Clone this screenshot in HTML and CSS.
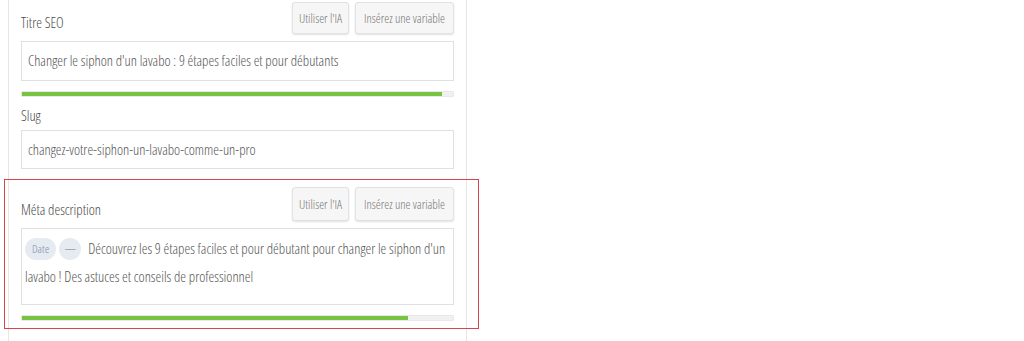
FILE: index.html
```html
<!DOCTYPE html>
<html lang="fr">
<head>
<meta charset="utf-8">
<title>SEO</title>
<link rel="stylesheet" href="styles.css">
</head>
<body>
<div class="panel">
  <section class="field">
    <div class="field-head">
      <span class="label">Titre SEO</span>
      <div class="actions">
        <button class="btn btn-ia">Utiliser l'IA</button>
        <button class="btn">Insérez une variable</button>
      </div>
    </div>
    <div class="input">Changer le siphon d'un lavabo : 9 étapes faciles et pour débutants</div>
    <div class="progress"><div class="bar" style="width: 97.5%"></div></div>
  </section>

  <section class="field field-slug">
    <div class="label label-block">Slug</div>
    <div class="input">changez-votre-siphon-un-lavabo-comme-un-pro</div>
  </section>

  <section class="field field-meta">
    <div class="highlight"></div>
    <div class="field-head">
      <span class="label">Méta description</span>
      <div class="actions">
        <button class="btn btn-ia">Utiliser l'IA</button>
        <button class="btn">Insérez une variable</button>
      </div>
    </div>
    <div class="textarea">
      <span class="chip">Date</span><span class="chip chip-dash">—</span><span class="desc">Découvrez les 9 étapes faciles et pour débutant pour changer le siphon d'un</span><br><span class="desc">lavabo ! Des astuces et conseils de professionnel</span>
    </div>
    <div class="progress"><div class="bar" style="width: 89.6%"></div></div>
  </section>
</div>
</body>
</html>
```
FILE: styles.css
```css
html, body {
  margin: 0;
  padding: 0;
  background: #ffffff;
}

body {
  width: 1024px;
  height: 341px;
  overflow: hidden;
  font-family: "Open Sans", "Noto Sans", sans-serif;
  font-stretch: 83%;
  font-weight: 350;
  color: #555;
}

.panel {
  margin-left: 8px;
  width: 433px;
  min-height: 341px;
  padding: 2px 12px 0 12px;
  border-left: 1px solid #e6e6e6;
  border-right: 1px solid #e6e6e6;
}

.field {
  position: relative;
}

.field-head {
  display: flex;
  justify-content: space-between;
  align-items: flex-end;
  height: 32px;
  margin-bottom: 7px;
}

.label {
  font-size: 14.5px;
  color: #4a4a4a;
  line-height: 18px;
  padding-bottom: 2px;
}

.actions {
  display: flex;
  gap: 6px;
  height: 32px;
}

.btn {
  font-family: inherit;
  font-stretch: 83%;
  font-weight: 350;
  font-size: 12.5px;
  color: #777;
  background: #f6f6f6;
  border: 1px solid #e2e2e2;
  border-radius: 3px;
  box-shadow: 0 1px 2px rgba(0, 0, 0, 0.12);
  padding: 0 4px;
  width: 99px;
  height: 32px;
  white-space: nowrap;
  cursor: pointer;
}

.btn-ia {
  width: 57px;
  padding: 0 2px;
}

.input {
  box-sizing: border-box;
  height: 40px;
  border: 1px solid #e0e0e0;
  padding: 0 6px;
  font-size: 14.5px;
  line-height: 38px;
  color: #555;
  white-space: nowrap;
}

.progress {
  margin-top: 10px;
  height: 6px;
  background: #f1f1f1;
  border: 1px solid #e8e8e8;
  box-sizing: border-box;
  border-radius: 1px;
  overflow: hidden;
}

.bar {
  height: 100%;
  background: #76c442;
}

.field-slug .label-block {
  margin-top: 10px;
  padding-bottom: 0;
  margin-bottom: 5px;
}

.field-slug .input {
  height: 39px;
  line-height: 37px;
}

.field-meta {
  margin-top: 18px;
}

.field-meta .field-head {
  height: 34px;
}

.field-meta .actions,
.field-meta .btn {
  height: 34px;
}

.textarea {
  box-sizing: border-box;
  height: 77px;
  border: 1px solid #e0e0e0;
  padding: 6px 3px 0 3px;
  font-size: 14.5px;
  line-height: 28px;
  color: #555;
  white-space: nowrap;
  overflow: hidden;
}

.chip {
  display: inline-block;
  height: 22px;
  line-height: 22px;
  padding: 0 7px;
  margin-right: 3px;
  border-radius: 11px;
  background: #e6eaf1;
  color: #8090aa;
  font-size: 11.5px;
  vertical-align: 1px;
}

.chip-dash {
  width: 22px;
  padding: 0;
  text-align: center;
  color: #6a7890;
  margin-right: 7px;
}

.highlight {
  position: absolute;
  left: -17px;
  right: -25px;
  top: -8px;
  height: 150px;
  border: 1.5px solid #d9434b;
  box-sizing: border-box;
  pointer-events: none;
}
```
